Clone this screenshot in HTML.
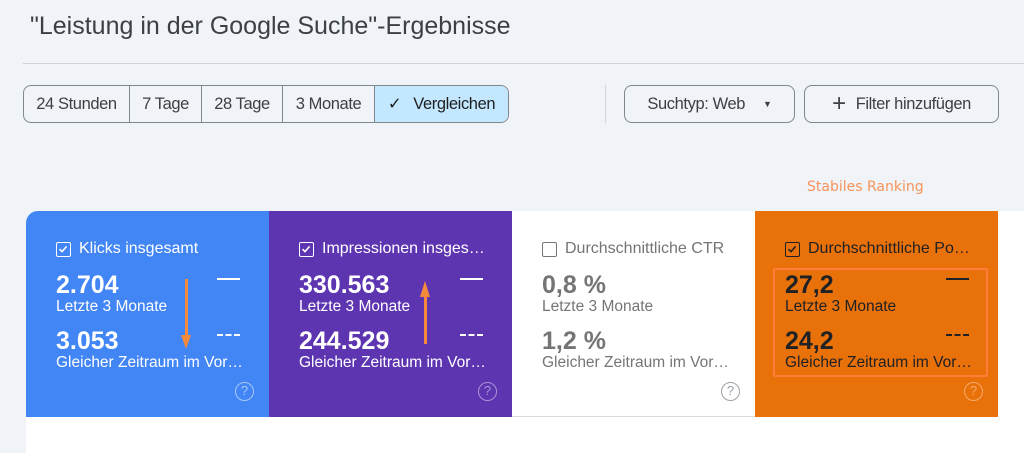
<!DOCTYPE html>
<html><head><meta charset="utf-8"><style>
*{margin:0;padding:0;box-sizing:border-box}
body{width:1024px;height:453px;background:#f0f3f8;font-family:"Liberation Sans",Arial,sans-serif;position:relative;overflow:hidden;color:#3c4043}
.a{position:absolute}
.title{left:30px;top:12px;font-size:25px;color:#3c4043}
.sep{left:23px;top:63px;width:1001px;height:1px;background:#d0d4d9}
.grp{left:23px;top:85px;width:486px;height:38px;border:1px solid #80868b;border-radius:8px;display:flex;overflow:hidden}
.seg{height:100%;font-size:16.5px;display:flex;align-items:center;justify-content:center;color:#3c4043;border-right:1px solid #80868b;letter-spacing:-.4px}
.btn{top:85px;height:38px;border:1px solid #80868b;border-radius:8px;font-size:16.5px;display:flex;align-items:center;justify-content:center;letter-spacing:-.4px}
.card{top:211px;width:243px;height:206px}
.cb{position:absolute;left:30px;top:31px;width:15px;height:15px;border:1.5px solid;border-radius:2px}
.cb svg{position:absolute;left:1px;top:1px}
.lbl{position:absolute;left:53px;top:29px;font-size:16px;white-space:nowrap}
.v{position:absolute;left:30px;font-size:25px;font-weight:bold}
.s{position:absolute;left:30px;font-size:15.5px;white-space:nowrap}
.l1{position:absolute;left:191px;top:67px;width:23px;height:2px}
.l2{position:absolute;left:191px;top:123px;width:23px;height:0;border-top:2px dashed}
.h{position:absolute;left:209px;top:171px;width:19px;height:19px;border:1.5px solid;border-radius:50%;font-size:13px;text-align:center;line-height:16px}
</style></head><body>
<div class="a title">"Leistung in der Google Suche"-Ergebnisse</div>
<div class="a sep"></div>
<div class="a grp">
<div class="seg" style="width:106px">24 Stunden</div>
<div class="seg" style="width:72px">7 Tage</div>
<div class="seg" style="width:81px">28 Tage</div>
<div class="seg" style="width:92px">3 Monate</div>
<div class="seg" style="flex:1;border-right:none;background:#c2e7ff;color:#1f1f1f"><span style="margin-right:12px">✓</span>Vergleichen</div>
</div>
<div class="a" style="left:605px;top:85px;width:1px;height:38px;background:#d0d4d9"></div>
<div class="a btn" style="left:624px;width:171px">Suchtyp: Web<span style="margin-left:18px;font-size:9px">▼</span></div>
<div class="a btn" style="left:804px;width:195px"><span style="font-size:24px;margin-right:10px;font-weight:300">+</span>Filter hinzufügen</div>
<div class="a" style="left:807px;top:179px;color:#f7955a;font-family:'DejaVu Sans',sans-serif;font-size:14px">Stabiles Ranking</div>
<div class="a" style="left:26px;top:417px;width:998px;height:36px;background:#fff"></div>
<div class="a" style="left:998px;top:211px;width:26px;height:206px;background:#fff"></div>

<div class="a card" style="left:26px;background:#4285f4;color:#fff;border-radius:12px 0 0 0">
<div class="cb" style="border-color:#fff"><svg width="10" height="10" viewBox="0 0 10 10"><path d="M1.5 5.2 L4 7.6 L8.6 2.4" stroke="#fff" stroke-width="1.6" fill="none"/></svg></div><div class="lbl">Klicks insgesamt</div>
<div class="v" style="top:60px">2.704</div><div class="s" style="top:87px">Letzte 3 Monate</div>
<div class="v" style="top:116px">3.053</div><div class="s" style="top:143px">Gleicher Zeitraum im Vor…</div>
<div class="l1" style="background:#fff"></div><div class="l2" style="border-color:#fff"></div>
<div class="h" style="border-color:#a9c7fa;color:#a9c7fa">?</div>
<div class="a" style="left:159px;top:68px;width:3px;height:63px;background:#f58a3c"></div>
<div class="a" style="left:155px;top:124px;border-left:5.5px solid transparent;border-right:5.5px solid transparent;border-top:14px solid #f58a3c"></div>
</div>
<div class="a card" style="left:269px;background:#5e35b1;color:#fff">
<div class="cb" style="border-color:#fff"><svg width="10" height="10" viewBox="0 0 10 10"><path d="M1.5 5.2 L4 7.6 L8.6 2.4" stroke="#fff" stroke-width="1.6" fill="none"/></svg></div><div class="lbl">Impressionen insges…</div>
<div class="v" style="top:60px">330.563</div><div class="s" style="top:87px">Letzte 3 Monate</div>
<div class="v" style="top:116px">244.529</div><div class="s" style="top:143px">Gleicher Zeitraum im Vor…</div>
<div class="l1" style="background:#fff"></div><div class="l2" style="border-color:#fff"></div>
<div class="h" style="border-color:#a894d8;color:#a894d8">?</div>
<div class="a" style="left:155px;top:86px;width:3px;height:47px;background:#f58a3c"></div>
<div class="a" style="left:151px;top:70px;border-left:5.5px solid transparent;border-right:5.5px solid transparent;border-bottom:16px solid #f58a3c"></div>
</div>
<div class="a card" style="left:512px;background:#fff;color:#757575;border-bottom:1px solid #dadce0">
<div class="cb" style="border-color:#757575"></div><div class="lbl">Durchschnittliche CTR</div>
<div class="v" style="top:60px">0,8 %</div><div class="s" style="top:87px">Letzte 3 Monate</div>
<div class="v" style="top:116px">1,2 %</div><div class="s" style="top:143px">Gleicher Zeitraum im Vor…</div>
<div class="h" style="border-color:#9aa0a6;color:#9aa0a6">?</div>
</div>
<div class="a card" style="left:755px;background:#e8710a;color:#202124">
<div class="cb" style="border-color:#202124"><svg width="10" height="10" viewBox="0 0 10 10"><path d="M1.5 5.2 L4 7.6 L8.6 2.4" stroke="#202124" stroke-width="1.6" fill="none"/></svg></div><div class="lbl">Durchschnittliche Po…</div>
<div class="v" style="top:60px">27,2</div><div class="s" style="top:87px">Letzte 3 Monate</div>
<div class="v" style="top:116px">24,2</div><div class="s" style="top:143px">Gleicher Zeitraum im Vor…</div>
<div class="l1" style="background:#202124"></div><div class="l2" style="border-color:#202124"></div>
<div class="h" style="border-color:#f7a868;color:#f7a868">?</div>
<div class="a" style="left:18px;top:57px;width:215px;height:109px;border:2.5px solid #ff7d3a;border-radius:2px"></div>
</div>
</body></html>
